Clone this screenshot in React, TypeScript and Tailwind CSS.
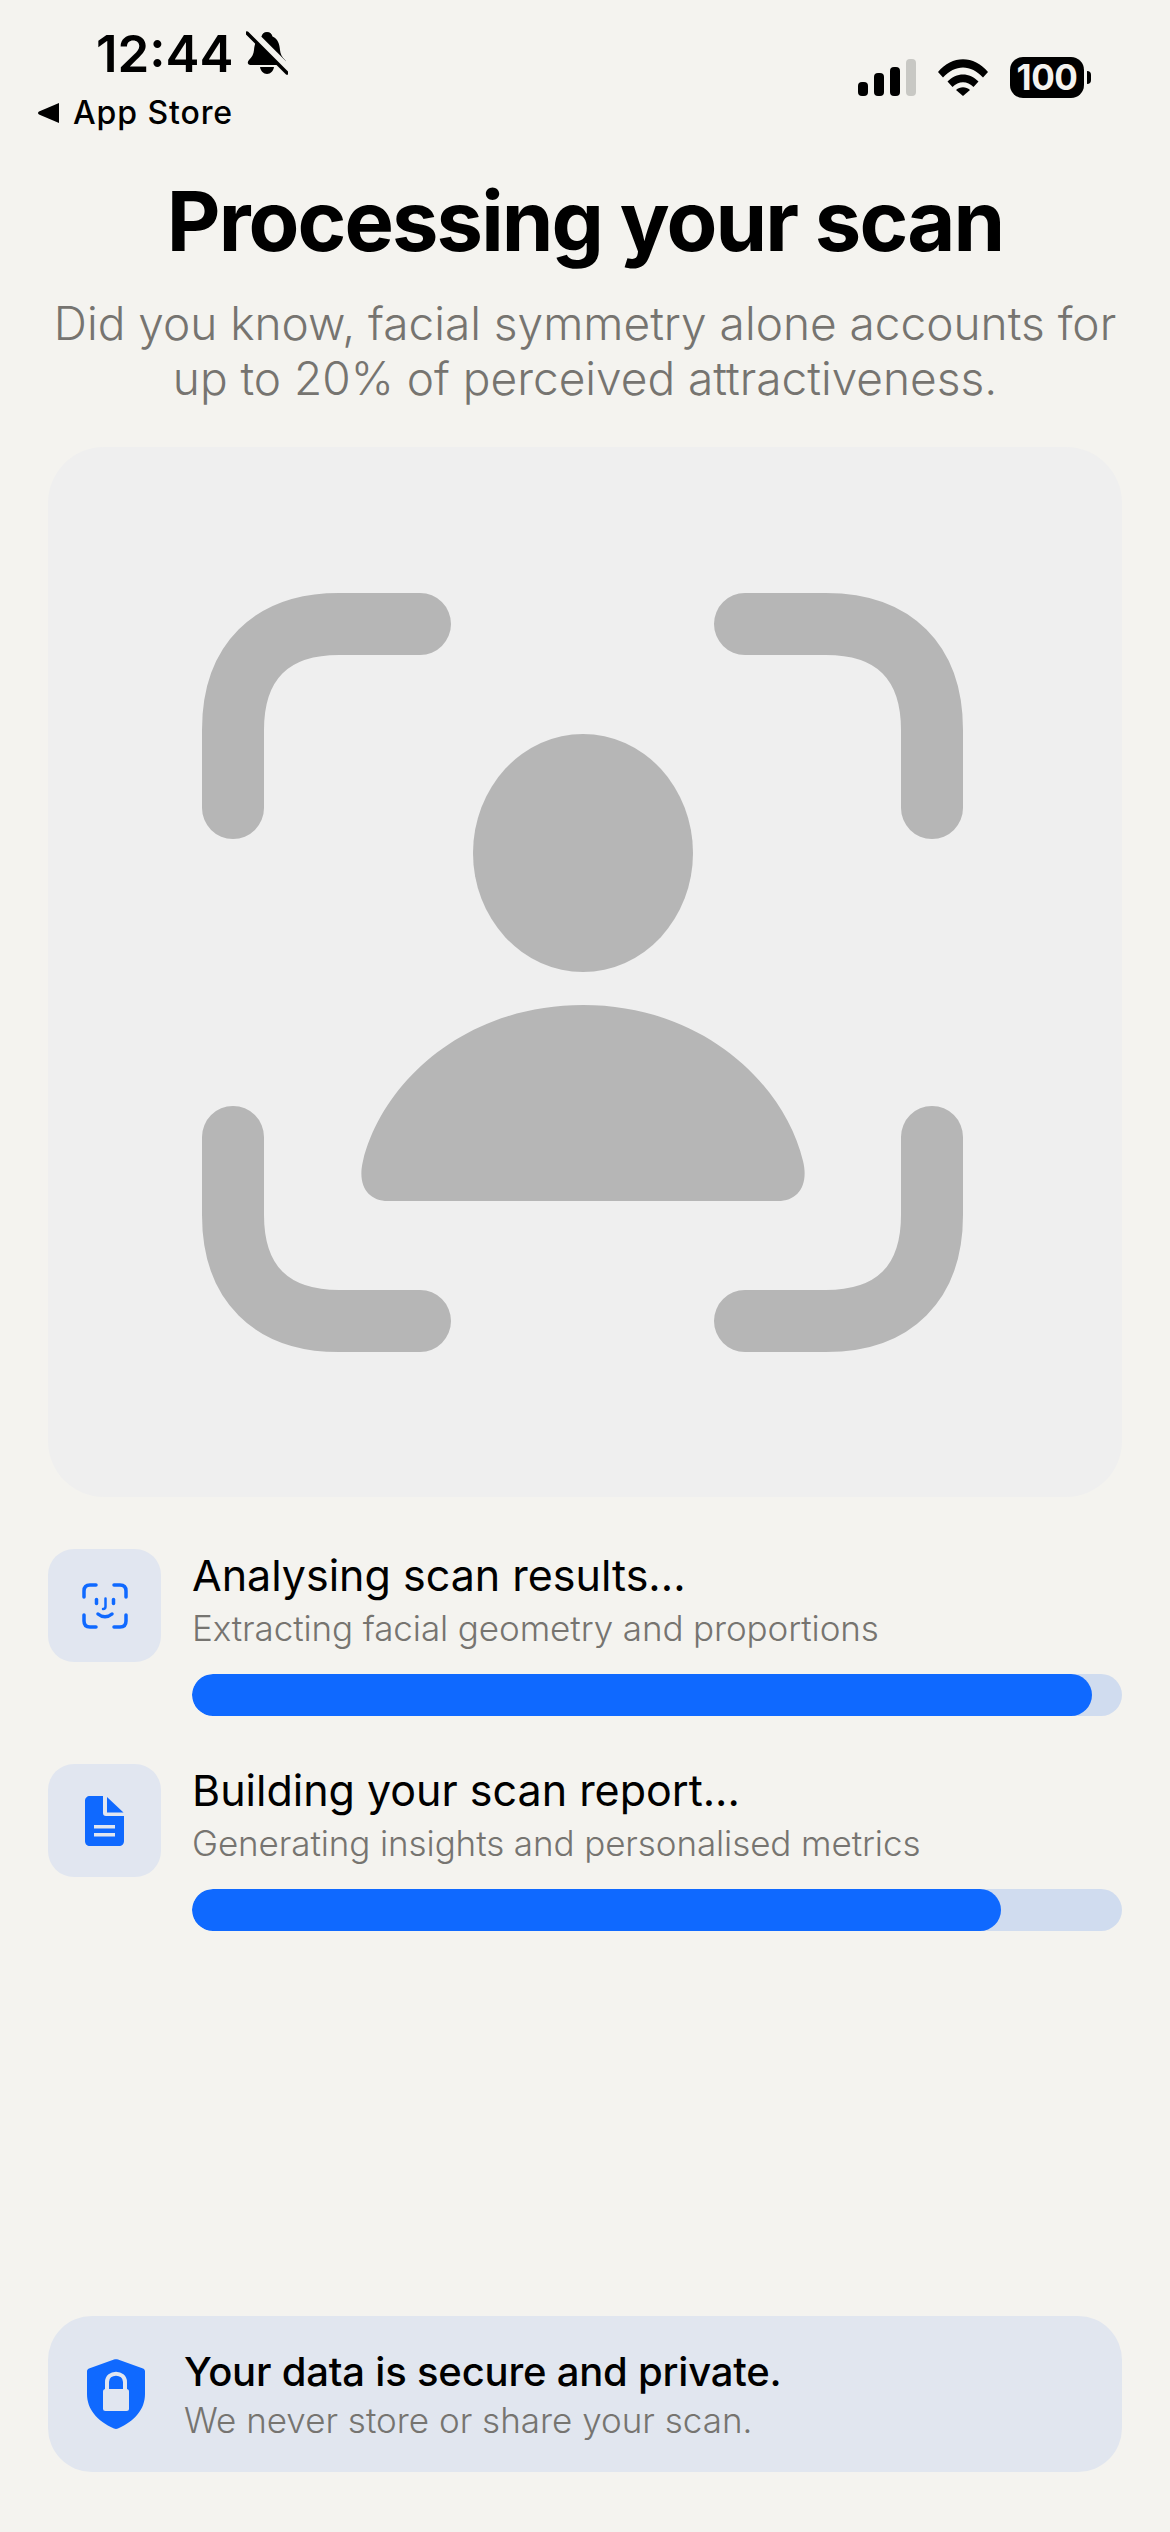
const font = 'font-["Inter",sans-serif]';

function BellOff() {
  return (
    <svg width="42" height="44" viewBox="0 0 42 44" className="ml-[12px] mt-[-2px]">
      <path d="M21 1c3 0 5 2 5.500 4.500C32 8 33.500 13 34 19c.3 4 2 7 5 10 2 2 1.500 5-1.500 5H4.500C1.500 34 1 31 3 29c3-3 4.700-6 5-10 .5-6 2-11 7.500-13.500C16 3 18 1 21 1Z" fill="#000" />
      <path d="M14 36h14c-.6 4-3.500 7-7 7s-6.400-3-7-7Z" fill="#000" />
      <path d="M3 -1 43 39" stroke="#f4f3ef" strokeWidth="8" />
      <path d="M1 2 41 42" stroke="#000" strokeWidth="3.500" strokeLinecap="round" />
    </svg>
  );
}

function SignalBars() {
  return (
    <svg width="58" height="37" viewBox="0 0 58 37">
      <rect x="0" y="23" width="10" height="14" rx="4" fill="#000" />
      <rect x="16" y="14" width="10" height="23" rx="4" fill="#000" />
      <rect x="32" y="8" width="10" height="29" rx="4" fill="#000" />
      <rect x="48" y="0" width="10" height="37" rx="4" fill="#c8c8c4" />
    </svg>
  );
}

function Wifi() {
  return (
    <svg width="50" height="37" viewBox="0 0 50 37">
      <path d="M0 13C14-4 36-4 50 13l-5 5.500C33 5 17 5 5 18.500Z" fill="#000" />
      <path d="M9.500 22.500c9-9.500 22-9.500 31 0l-5 5.500c-6-6.500-15-6.500-21 0Z" fill="#000" />
      <path d="M18 31c4-3.800 10-3.800 14 0l-7 6Z" fill="#000" />
    </svg>
  );
}

function Battery() {
  return (
    <div className="flex items-center gap-[3px]">
      <div className={`flex h-[41px] w-[74px] items-center justify-center rounded-[13px] bg-black text-[35px] font-bold leading-none tracking-[-0.5px] text-[#f4f3ef] ${font}`}>
        100
      </div>
      <div className="h-[13px] w-[4px] rounded-r-full bg-black" />
    </div>
  );
}

function StatusBar() {
  return (
    <div className="flex h-[150px] items-start justify-between pl-[38px] pr-[79px] pt-[30px]">
      <div className="flex flex-col">
        <div className="flex items-center pl-[58px]">
          <span className={`text-[51px] font-semibold leading-[48px] text-black ${font}`}>12:44</span>
          <BellOff />
        </div>
        <div className="mt-[16px] flex items-center gap-[14px]">
          <svg width="21" height="20" viewBox="0 0 21 20">
            <path d="M21 0v20L1 11.500c-1.300-.6-1.300-2.400 0-3Z" fill="#000" />
          </svg>
          <span className={`text-[32px] font-medium leading-[38px] tracking-[0.9px] text-black ${font}`}>App Store</span>
        </div>
      </div>
      <div className="mt-[27px] flex items-center gap-[22px]">
        <SignalBars />
        <Wifi />
        <Battery />
      </div>
    </div>
  );
}

function FaceScan() {
  return (
    <svg width="761" height="759" viewBox="0 0 761 759">
      <g fill="none" stroke="#b6b6b6" strokeWidth="62" strokeLinecap="round">
        <path d="M31 215V137C31 69 69 31 137 31H218" />
        <path d="M730 215V137C730 69 692 31 624 31H543" />
        <path d="M31 544V622C31 690 69 728 137 728H218" />
        <path d="M730 544V622C730 690 692 728 624 728H543" />
      </g>
      <ellipse cx="381" cy="260" rx="110" ry="119" fill="#b6b6b6" />
      <path d="M381 412C262 412 180 490 161 568C155 592 166 608 186 608H576C596 608 607 592 601 568C582 490 500 412 381 412Z" fill="#b6b6b6" />
    </svg>
  );
}

function FaceIdIcon() {
  return (
    <svg width="46" height="46" viewBox="0 0 46 46" fill="none" stroke="#0f69ff" strokeWidth="3.500" strokeLinecap="round">
      <path d="M2 14V8c0-4 2-6 6-6h6" />
      <path d="M44 14V8c0-4-2-6-6-6h-6" />
      <path d="M2 32v6c0 4 2 6 6 6h6" />
      <path d="M44 32v6c0 4-2 6-6 6h-6" />
      <path d="M14.500 16.500v4" />
      <path d="M31.500 16.500v4" />
      <path d="M23.500 15.500v8c0 1.500-1 2.500-2.500 2.500" strokeWidth="2.500" />
      <path d="M16 31c4 3.500 10 3.500 14 0" />
    </svg>
  );
}

function DocIcon() {
  return (
    <svg width="39" height="50" viewBox="0 0 39 50">
      <path d="M5 0H18V17c0 2 1 3 3 3H39V45c0 3-2 5-5 5H5c-3 0-5-2-5-5V5C0 2 2 0 5 0Z" fill="#0f69ff" />
      <path d="M22 1 38.500 16.500H22Z" fill="#0f69ff" />
      <rect x="9" y="29" width="21" height="3.500" fill="#e1e6f0" />
      <rect x="9" y="37" width="21" height="3.500" fill="#e1e6f0" />
    </svg>
  );
}

function ShieldLock() {
  return (
    <svg width="58" height="70" viewBox="0 0 58 70">
      <path d="M27 .5c1.300-.5 2.700-.5 4 0l25 9c1.300.5 2 1.500 2 3V35c0 15-10 27-27 34.500-1.300.6-2.700.6-4 0C10 62 0 50 0 35V12.500c0-1.500.7-2.500 2-3Z" fill="#0f69ff" />
      <path d="M20 31V23c0-11 18-11 18 0v8" fill="none" stroke="#e1e6f0" strokeWidth="4" />
      <rect x="16" y="30" width="26" height="22" rx="2.500" fill="#e1e6f0" />
    </svg>
  );
}

function ProgressRow({ icon, title, detail, fill }: { icon: React.ReactNode; title: string; detail: string; fill: number }) {
  return (
    <div className="flex gap-[31px]">
      <div className="flex h-[113px] w-[113px] shrink-0 items-center justify-center rounded-[26px] bg-[#e1e6f0]">{icon}</div>
      <div className="flex flex-1 flex-col">
        <div className={`text-[43px] font-normal leading-[52px] text-black ${font}`}>{title}</div>
        <div className={`mt-[6px] text-[35px] font-light leading-[42px] tracking-[-0.1px] text-[#767470] ${font}`}>{detail}</div>
        <div className="mt-[25px] h-[42px] overflow-hidden rounded-full bg-[#d0dcef]">
          <div className="h-full rounded-full bg-[#0f69ff]" style={{ width: `${fill}%` }} />
        </div>
      </div>
    </div>
  );
}

export default function App() {
  return (
    <div className="flex h-[2532px] w-[1170px] flex-col overflow-hidden bg-[#f4f3ef]">
      <StatusBar />
      <h1 className={`mt-[26px] text-center text-[83px] font-bold leading-[90px] tracking-[-1.9px] text-black ${font}`}>
        Processing your scan
      </h1>
      <p className={`mt-[30px] text-center text-[46px] font-light leading-[55px] text-[#767470] ${font}`}>
        Did you know, facial symmetry alone accounts for
        <br />
        up to 20% of perceived attractiveness.
      </p>
      <div className="mx-[48px] mt-[41px] flex h-[1050px] items-center justify-center rounded-[56px] bg-[#efefef] pr-[5px]">
        <FaceScan />
      </div>
      <div className="mx-[48px] mt-[52px] flex flex-col gap-[48px]">
        <ProgressRow
          icon={<FaceIdIcon />}
          title="Analysing scan results..."
          detail="Extracting facial geometry and proportions"
          fill={96.8}
        />
        <ProgressRow
          icon={<DocIcon />}
          title="Building your scan report..."
          detail="Generating insights and personalised metrics"
          fill={87}
        />
      </div>
      <div className="mx-[48px] mb-[60px] mt-auto flex h-[156px] items-center gap-[39px] rounded-[44px] bg-[#e1e6ef] pl-[39px]">
        <ShieldLock />
        <div className="flex flex-col">
          <div className={`text-[40px] font-medium leading-[48px] tracking-[-0.2px] text-black ${font}`}>Your data is secure and private.</div>
          <div className={`mt-[3px] text-[35px] font-light leading-[42px] text-[#767470] ${font}`}>We never store or share your scan.</div>
        </div>
      </div>
    </div>
  );
}
